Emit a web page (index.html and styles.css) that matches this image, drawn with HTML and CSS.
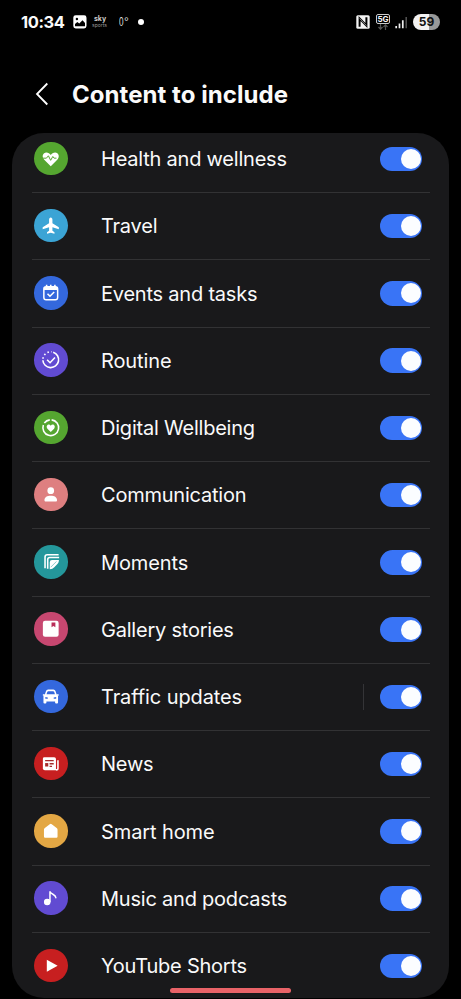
FILE: index.html
```
<!DOCTYPE html>
<html lang="en">
<head>
<meta charset="utf-8">
<title>Content to include</title>
<link rel="stylesheet" href="styles.css">
</head>
<body>
<div class="screen">
<div class="status">
<span class="time">10:34</span>
<svg class="photo" width="14" height="14" viewBox="0 0 14 14"><rect x=".3" y=".3" width="13.2" height="13.2" rx="2.4" fill="#fff"/><circle cx="3.9" cy="4" r="1.2" fill="#000"/><path d="M2 11.3V9l2.3-2 2 1.6L9.500 5.300 12 8v3.300z" fill="#000"/></svg>
<span class="sky"><b>sky</b><i>sports</i></span>
<span class="temp"><b>0</b>°</span>
<span class="dot"></span>
<span class="right">
<svg width="14" height="14" viewBox="0 0 14 14"><rect x=".3" y=".3" width="13.400" height="13.400" rx="1.500" fill="#f4f4f4"/><path d="M3.600 11.800V3.500l6.800 7V2.200" fill="none" stroke="#000" stroke-width="2"/><path d="m3.600 3.500 6.800 7" stroke="#f4f4f4" stroke-width=".5"/></svg>
<span class="net"><b>5G</b><svg width="12" height="6" viewBox="0 0 12 6"><path d="M3.500 0v5M1.500 3l2 2.200L5.500 3M8.500 6V1M6.500 3l2-2.200L10.500 3" fill="none" stroke="#555" stroke-width="1.200"/></svg></span>
<svg class="signal" width="13" height="13" viewBox="0 0 13 13"><path d="M1.200 10v2.300M4.500 7.500v4.800M7.800 4.200v8.100" stroke="#eee" stroke-width="1.700"/><path d="M11.200 1v11.300" stroke="#555" stroke-width="1.500"/></svg>
<span class="battery">59</span>
</span>
</div>
<header>
<svg width="14" height="24" viewBox="0 0 14 24"><path d="M12.300 1.500 2 12l10.300 10.500" fill="none" stroke="#fff" stroke-width="1.800"/></svg>
<h1>Content to include</h1>
</header>
<main>
<div class="row"><span class="icon green"><svg viewBox="0 0 34 34"><path d="M17 24.500 10.400 18C7.300 14.600 9.200 10.600 12.500 10.600c2 0 3.500 1.100 4.500 2.600 1-1.500 2.500-2.600 4.500-2.600 3.300 0 5.200 4 2.100 7.400z" fill="#fff"/><path d="M8 16.400h4.600l2-2.400 2.300 4.600 2.200-3.900 1.300 1.700h2.400" fill="none" stroke="#55a630" stroke-width="1"/></svg></span><span class="label">Health and wellness</span><span class="toggle"></span></div>
<div class="row"><span class="icon sky-blue"><svg viewBox="0 0 34 34"><path d="M17 8.500c1 0 1.700 1 1.700 2.300v3.700l6.500 4v2l-6.500-1.900v3.400l2.100 1.600v1.500L17 24.200l-3.800.9v-1.500l2.100-1.600v-3.400l-6.500 1.900v-2l6.500-4v-3.700c0-1.300.7-2.300 1.700-2.300z" fill="#fff"/></svg></span><span class="label">Travel</span><span class="toggle"></span></div>
<div class="row"><span class="icon blue"><svg viewBox="0 0 34 34" fill="none" stroke="#fff" stroke-width="1.500"><rect x="10" y="11" width="14" height="13" rx="2.300"/><path d="M10 12.700h14" stroke-width="3"/><path d="M12.800 9v3M17 9v3M21.200 9v3" stroke-width="1.600"/><path d="m13.700 18 2.500 2.500 4.300-4.200" stroke-width="1.600"/></svg></span><span class="label">Events and tasks</span><span class="toggle"></span></div>
<div class="row"><span class="icon purple"><svg viewBox="0 0 34 34" fill="none" stroke="#fff" stroke-width="1.600"><path d="M19.500 9.400A8 8 0 1 1 9 17.500"/><path d="M9.100 16A8 8 0 0 1 18 9" stroke-dasharray="1.600 2.400"/><path d="m13.300 17 3 3 5-5.300"/></svg></span><span class="label wide">Routine</span><span class="toggle"></span></div>
<div class="row"><span class="icon green"><svg viewBox="0 0 34 34"><path d="M17.900 9A8 8 0 1 1 9.500 14.200M10.500 12.200A8 8 0 0 1 16 9" fill="none" stroke="#fff" stroke-width="1.600"/><path d="m17 21.300-3.400-3.400c-1.700-2.100 0-4.100 1.400-4.100.9 0 1.500.4 2 1.200.5-.8 1.100-1.200 2-1.200 1.400 0 3.100 2 1.400 4.100z" fill="#fff"/></svg></span><span class="label">Digital Wellbeing</span><span class="toggle"></span></div>
<div class="row"><span class="icon pink"><svg viewBox="0 0 34 34" fill="#fff"><circle cx="17" cy="12.900" r="3.400"/><path d="M10.600 22.500c0-3.300 2.800-4.600 6.400-4.600s6.400 1.300 6.400 4.600c0 1-.6 1.300-1.300 1.300H11.900c-.7 0-1.300-.3-1.300-1.300z"/></svg></span><span class="label">Communication</span><span class="toggle"></span></div>
<div class="row"><span class="icon teal"><svg viewBox="0 0 34 34"><path d="M11.200 23.700V12.200q0-2.300 2.300-2.300H25M13.900 24V14.800q0-2.200 2.200-2.200H25.500" fill="none" stroke="#fff" stroke-width="1.600"/><path d="M16 24.500v-7q0-2.300 2.300-2.300h7c0 2-.6 3.200-2 4.600l-2.700 2.700c-1.300 1.300-2.500 2-4.600 2z" fill="#fff"/><path d="m17 22.500 5.800-5.800" stroke="#24979b" stroke-width=".5"/></svg></span><span class="label wide">Moments</span><span class="toggle"></span></div>
<div class="row"><span class="icon rose"><svg viewBox="0 0 34 34"><rect x="9" y="9" width="16" height="16" rx="2.200" fill="#fff"/><path d="M17.800 10.600h3.900v5l-2-1.300-1.900 1.300z" fill="#b92d59"/></svg></span><span class="label">Gallery stories</span><span class="toggle"></span></div>
<div class="row"><span class="icon blue"><svg viewBox="0 0 34 34"><path d="m11 14.800 1.200-3.600q.5-1.600 2.100-1.600h5.400q1.600 0 2.100 1.600l1.200 3.600 1.400 1.400v6.600q0 1-1 1h-1q-1 0-1-1v-1h-8.800v1q0 1-1 1h-1q-1 0-1-1v-6.600z" fill="#fff"/><path d="M9 15.200h2M23 15.200h2" stroke="#fff" stroke-width="1.500"/><path d="m12.700 14.500.9-2.500q.2-.7 1-.7h4.800q.8 0 1 .7l.9 2.500zM11.500 17.200l2.500.6v1.300h-2.500zM22.500 17.200l-2.500.6v1.300h2.500z" fill="#3468dd"/></svg></span><span class="label wide">Traffic updates</span><span class="split"></span><span class="toggle"></span></div>
<div class="row"><span class="icon red"><svg viewBox="0 0 34 34"><path d="M10.500 10.500h10q1.800 0 1.800 1.800v11.300H11q-2 0-2-2V12q0-1.500 1.500-1.500z" fill="#fff"/><path d="M24.300 13.500v8.300q0 1.400-2 1.400" fill="none" stroke="#fff" stroke-width="1.600"/><path d="M11.300 13.800H20M15.800 17H20M15.800 19.600h2.500" stroke="#a52c2c" stroke-width="1.300"/><path d="M11.300 16.300h3.200v3.500h-3.200z" fill="#a52c2c"/></svg></span><span class="label">News</span><span class="toggle"></span></div>
<div class="row"><span class="icon amber"><svg viewBox="0 0 34 34"><path d="m16 10.300-5 4q-.9.700-.9 1.800v6.700q0 1.200 1.200 1.200h11.400q1.200 0 1.200-1.200v-6.700q0-1.100-.9-1.800l-5-4q-1-.8-2 0z" fill="#fff"/></svg></span><span class="label wide">Smart home</span><span class="toggle"></span></div>
<div class="row"><span class="icon purple"><svg viewBox="0 0 34 34"><circle cx="13.400" cy="21.300" r="3.300" fill="#fff"/><path d="M16.200 21V10.500c.7 3.300 6 2.700 6 6.500" fill="none" stroke="#fff" stroke-width="1.500" stroke-linecap="round"/></svg></span><span class="label">Music and podcasts</span><span class="toggle"></span></div>
<div class="row"><span class="icon red"><svg viewBox="0 0 34 34"><path d="M13 11v12l11-6z" fill="#fff"/></svg></span><span class="label">YouTube Shorts</span><span class="toggle"></span></div>
</main>
<div class="handle"></div>
</div>
</body>
</html>
```
FILE: styles.css
```
* { box-sizing: border-box; }
body { margin: 0; background: #000; color: #fafafa; font-family: Inter, sans-serif; }
svg { display: block; flex: none; }
.screen { position: relative; width: 461px; height: 999px; overflow: hidden; }
.status { display: flex; align-items: center; height: 44px; padding: 0 21px; }
.time { width: 52px; font-size: 16.5px; font-weight: 700; letter-spacing: -0.4px; white-space: nowrap; }
.sky { width: 16px; margin-left: 5px; text-align: center; line-height: 6px; color: #ccc; }
.sky b, .sky i { display: block; font-style: normal; }
.sky b { font-size: 7px; }
.sky i { margin-left: -1px; font-size: 5px; color: #999; }
.temp { display: flex; margin-left: 11px; width: 12px; font: 12px "Liberation Sans", sans-serif; color: #ddd; }
.temp b { width: 5px; font-weight: 400; transform: scaleX(.68); transform-origin: left; }
.dot { width: 6px; height: 6px; border-radius: 50%; margin-left: 7px; background: #fff; }
.right { display: flex; align-items: center; margin-left: auto; }
.net { display: flex; flex-direction: column; align-items: center; width: 14px; margin: 0 5px 0 6px; }
.net b { width: 14px; height: 10px; border: 1px solid #ccc; border-radius: 2px; font-size: 8px; line-height: 8px; text-align: center; }
.battery { width: 27px; height: 16px; margin-left: 5px; border-radius: 8px; background: linear-gradient(90deg, #f2f2f2 59%, #999 59%); color: #111; font-size: 12px; line-height: 16px; font-weight: 700; text-align: center; }
header { display: flex; align-items: center; height: 100px; padding-left: 35px; margin-bottom: -12px; }
h1 { margin: 0 0 0 23px; font-size: 24px; font-weight: 700; letter-spacing: 0.05px; white-space: nowrap; }
main { position: relative; width: 437px; height: 865px; margin: 0.5px 0 0 12px; padding: 0 19px 0 20px; border-radius: 32px; background: #19191b; overflow: hidden; display: flex; flex-direction: column; }
.row { display: flex; align-items: center; flex: none; height: 67.250px; padding: 0 8px 0 2px; border-bottom: 1px solid #323234; }
.row:first-child { margin-top: -6.700px; }
.row:last-child { border-bottom: 0; height: 66.250px; }
.icon { width: 33.500px; height: 33.500px; flex: none; border-radius: 50%; margin-top: -1px; }
.green { background: #55a630; }
.sky-blue { background: #3ba4d5; }
.blue { background: #3468dd; }
.purple { background: #614bd2; }
.pink { background: #de7f80; }
.teal { background: #24979b; }
.rose { background: #c74770; }
.red { background: #c71f20; }
.amber { background: #e3a744; }
.label { margin-left: 33.500px; padding-top: 0.6px; font-size: 20px; line-height: 26px; letter-spacing: -0.22px; white-space: nowrap; }
.wide { letter-spacing: -0.1px; }
.toggle { width: 42px; height: 24.500px; margin-left: auto; padding: 2.250px 1.500px; border-radius: 13px; background: #3974f6; }
.toggle::after { content: ""; display: block; width: 20px; height: 20px; margin-left: auto; border-radius: 50%; background: #fbfdff; }
.split { width: 1px; height: 26px; margin-left: auto; background: #343437; }
.split + .toggle { margin-left: 16px; }
.handle { position: absolute; left: 170px; top: 987.500px; width: 121px; height: 5px; border-radius: 3px; background: #e96368; }
```
